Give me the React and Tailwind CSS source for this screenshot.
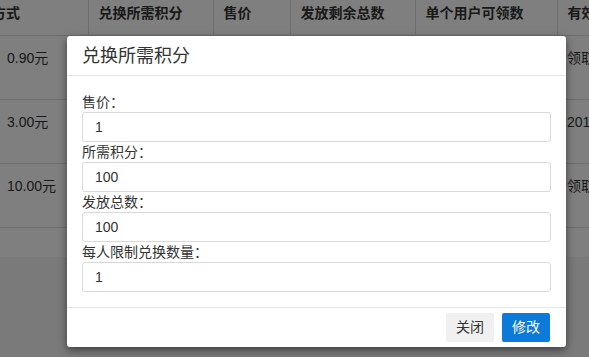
import React from 'react'

const font = { fontFamily: '"Liberation Sans", "Noto Sans CJK SC", sans-serif' }

const rows = [
    { price: '0.90元', valid: '领取后30天内有效' },
    { price: '3.00元', valid: '2018-01-01至2018-12-31' },
    { price: '10.00元', valid: '领取后7天内有效' },
]

const fields = [
    { label: '售价：', value: '1' },
    { label: '所需积分：', value: '100' },
    { label: '发放总数：', value: '100' },
    { label: '每人限制兑换数量：', value: '1' },
]

export default function App() {
    return (
        <div className="relative h-[357px] overflow-hidden bg-[#f4f4f4] text-[14px] text-[#333]" style={font}>
            {/* 表格 */}
            <div className="bg-white pb-[29px] overflow-hidden">
                <table className="table-fixed border-collapse -ml-[3px] w-[800px]">
                    <colgroup>
                        <col className="w-[91px]" />
                        <col className="w-[125px]" />
                        <col className="w-[77px]" />
                        <col className="w-[125px]" />
                        <col className="w-[142px]" />
                        <col className="w-[240px]" />
                    </colgroup>
                    <thead>
                        <tr>
                            <th className="h-[35px] align-top pt-[3px] px-[10px] text-left font-bold leading-5 border-b border-[#ddd] border-r whitespace-nowrap"><span className="-ml-[15px]">方式</span></th>
                            <th className="h-[35px] align-top pt-[3px] px-[10px] text-left font-bold leading-5 border-b border-r border-[#ddd] whitespace-nowrap">兑换所需积分</th>
                            <th className="h-[35px] align-top pt-[3px] px-[10px] text-left font-bold leading-5 border-b border-r border-[#ddd] whitespace-nowrap">售价</th>
                            <th className="h-[35px] align-top pt-[3px] px-[10px] text-left font-bold leading-5 border-b border-r border-[#ddd] whitespace-nowrap">发放剩余总数</th>
                            <th className="h-[35px] align-top pt-[3px] px-[10px] text-left font-bold leading-5 border-b border-r border-[#ddd] whitespace-nowrap">单个用户可领数</th>
                            <th className="h-[35px] align-top pt-[3px] px-[10px] text-left font-bold leading-5 border-b border-[#ddd] whitespace-nowrap">有效期</th>
                        </tr>
                    </thead>
                    <tbody>
                        {rows.map((r, i) => (
                            <tr key={i}>
                                <td className="h-[64px] align-top pt-3 px-[10px] leading-5 border-b border-[#ddd]">{r.price}</td>
                                <td className="h-[64px] align-top pt-3 px-[10px] leading-5 border-b border-[#ddd]">100</td>
                                <td className="h-[64px] align-top pt-3 px-[10px] leading-5 border-b border-[#ddd]">1</td>
                                <td className="h-[64px] align-top pt-3 px-[10px] leading-5 border-b border-[#ddd]">100</td>
                                <td className="h-[64px] align-top pt-3 px-[10px] leading-5 border-b border-[#ddd]">1</td>
                                <td className="h-[64px] align-top pt-3 px-[10px] leading-5 border-b border-[#ddd] whitespace-nowrap">{r.valid}</td>
                            </tr>
                        ))}
                    </tbody>
                </table>
            </div>

            {/* 遮罩 */}
            <div className="absolute inset-0 bg-black/50" />

            {/* 弹窗 */}
            <div className="absolute left-[67px] top-[36px] w-[499px] bg-white rounded-[3px] shadow-[0_3px_9px_rgba(0,0,0,0.5)]">
                <div className="h-[40px] flex items-center px-[15px] border-b border-[#e5e5e5]">
                    <h4 className="text-[18px] text-[#333] leading-[20px]">兑换所需积分</h4>
                </div>
                <div className="pt-[16px] pb-[15px] px-[15px]">
                    {fields.map(f => (
                        <div key={f.label}>
                            <label className="block leading-5 text-[14px] text-[#333]">{f.label}</label>
                            <input
                                type="text"
                                readOnly
                                value={f.value}
                                className="block w-full h-[30px] px-3 border border-[#d9d9d9] rounded-[3px] text-[14px] text-[#333] outline-none"
                                style={font}
                            />
                        </div>
                    ))}
                </div>
                <div className="border-t border-[#e5e5e5] px-[16px] py-[5px] flex justify-end gap-2">
                    <button className="h-[29px] w-[48px] rounded-[2px] bg-[#f0f0f0] text-[#333] text-[14px]">关闭</button>
                    <button className="h-[29px] w-[48px] rounded-[2px] bg-[#0b7ad9] text-white text-[14px]">修改</button>
                </div>
            </div>
        </div>
    )
}
